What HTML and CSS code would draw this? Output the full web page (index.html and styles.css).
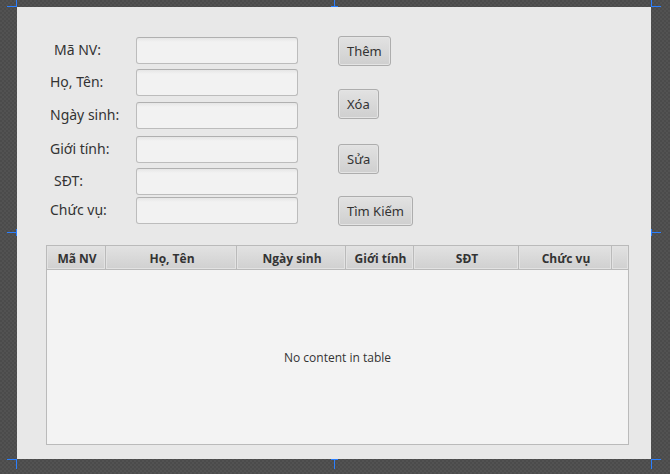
FILE: index.html
```html
<!DOCTYPE html>
<html lang="vi">
<head>
<meta charset="utf-8">
<title>Nhân viên</title>
<link rel="stylesheet" href="styles.css">
</head>
<body>
<main class="pane">
  <form class="form">
    <div class="fields">
      <label class="indent" for="ma">Mã NV:</label><input id="ma" type="text">
      <label for="ten">Họ, Tên:</label><input id="ten" type="text">
      <label for="ngay">Ngày sinh:</label><input id="ngay" type="text">
      <label for="gioi">Giới tính:</label><input id="gioi" type="text">
      <label class="indent" for="sdt">SĐT:</label><input id="sdt" type="text">
      <label for="chuc">Chức vụ:</label><input id="chuc" type="text">
    </div>
    <div class="actions">
      <button type="button">Thêm</button>
      <button type="button">Xóa</button>
      <button type="button">Sửa</button>
      <button type="button">Tìm Kiếm</button>
    </div>
  </form>
  <table class="grid">
    <colgroup>
      <col class="c-id"><col class="c-name"><col class="c-birth"><col class="c-sex"><col class="c-phone"><col class="c-role"><col>
    </colgroup>
    <thead>
      <tr><th>Mã NV</th><th>Họ, Tên</th><th>Ngày sinh</th><th>Giới tính</th><th>SĐT</th><th>Chức vụ</th><th></th></tr>
    </thead>
    <tbody>
      <tr><td colspan="7">No content in table</td></tr>
    </tbody>
  </table>
  <i class="mark corner tl"></i>
  <i class="mark corner tr"></i>
  <i class="mark corner bl"></i>
  <i class="mark corner br"></i>
  <svg class="mark top" width="7" height="7"><path d="M3 0h1v6h3v1H0V6h3z"/></svg>
  <svg class="mark bottom" width="7" height="10"><path d="M0 0h7v1H4v9H3V1H0z"/></svg>
  <svg class="mark left" width="10" height="7"><path d="M9 0h1v7H9V4H0V3h9z"/></svg>
  <svg class="mark right" width="10" height="7"><path d="M0 0h1v3h9v1H1v3H0z"/></svg>
</main>
</body>
</html>
```
FILE: styles.css
```css
* { box-sizing: border-box; }

body {
  margin: 0;
  min-height: 100vh;
  display: flex;
  padding: 7px 19px 15px 17px;
  overflow: hidden;
  background-color: #4b4b4b;
  background-image:
    conic-gradient(#525252 25%, transparent 0 50%, #525252 0 75%, transparent 0);
  background-size: 4px 4px;
  font-family: "Noto Sans", "Open Sans", sans-serif;
  color: #333;
}

.pane {
  position: relative;
  flex: 1;
  display: flex;
  flex-direction: column;
  gap: 19px;
  padding: 29px 22px 14px 29px;
  background: #e8e8e8;
}

.form {
  display: flex;
  gap: 40px;
  padding-left: 3px;
}

.fields {
  display: grid;
  grid-template-columns: 87px 162px;
  grid-template-rows: 32px 33px 34px 32px 29px 27px;
  padding-top: 1px;
}

.fields label {
  height: 27px;
  padding-left: 1px;
  font-size: 14px;
  line-height: 25px;
  white-space: nowrap;
}

.fields .indent { padding-left: 5px; }

.fields input {
  width: 100%;
  height: 27px;
  padding: 4px 7px;
  font: inherit;
  font-size: 12px;
  border: 1px solid #bcbcbc;
  border-top-color: #b0b0b0;
  border-radius: 3px;
  background: linear-gradient(#e6e6e6, #f2f2f2 4px);
}

.actions {
  display: grid;
  grid-template-rows: 53px 55px 52px 30px;
  justify-items: start;
}

.actions button {
  height: 30px;
  padding: 0 8px;
  font: inherit;
  font-size: 13px;
  line-height: 28px;
  color: #333;
  border: 1px solid #adadad;
  border-radius: 3px;
  background: linear-gradient(#e2e2e2, #cfcfcf);
  box-shadow: inset 0 0 0 1px #e4e4e4;
}

.grid {
  flex: 1;
  display: table;
  width: 100%;
  height: 200px;
  table-layout: fixed;
  border: 1px solid #bababa;
  border-collapse: separate;
  border-spacing: 0;
  background: #f3f3f3;
  font-size: 12px;
}

.c-id { width: 59px; }
.c-name { width: 131px; }
.c-birth { width: 109px; }
.c-sex { width: 68px; }
.c-phone { width: 105px; }
.c-role { width: 93px; }

.grid th {
  height: 24px;
  padding: 2px 0 0 2px;
  font-family: "Open Sans", "Noto Sans", sans-serif;
  font-size: 12px;
  line-height: 16px;
  font-weight: 700;
  border-right: 1px solid #bababa;
  border-bottom: 1px solid #bababa;
  background: linear-gradient(#e2e2e2, #d0d0d0);
  box-shadow: inset 0 0 0 1px #e2e2e2;
}

.grid th:last-child { border-right: 0; }

.grid td {
  padding: 0;
  font-family: "Open Sans", "Noto Sans", sans-serif;
  text-align: center;
  vertical-align: middle;
}

.mark { position: absolute; fill: #2a7fff; }
.corner { width: 10px; height: 10px; border: 0 solid #2a7fff; }
.tl { right: 100%; bottom: 100%; border-width: 0 1px 1px 0; }
.tr { left: 100%; bottom: 100%; border-width: 0 0 1px 1px; }
.bl { right: 100%; top: 100%; border-width: 1px 1px 0 0; }
.br { left: 100%; top: 100%; border-width: 1px 0 0 1px; }
.top { left: calc(50% - 3px); bottom: 100%; }
.bottom { left: calc(50% - 3px); top: 100%; }
.left { right: 100%; top: calc(50% - 4px); }
.right { left: 100%; top: calc(50% - 4px); }
```
